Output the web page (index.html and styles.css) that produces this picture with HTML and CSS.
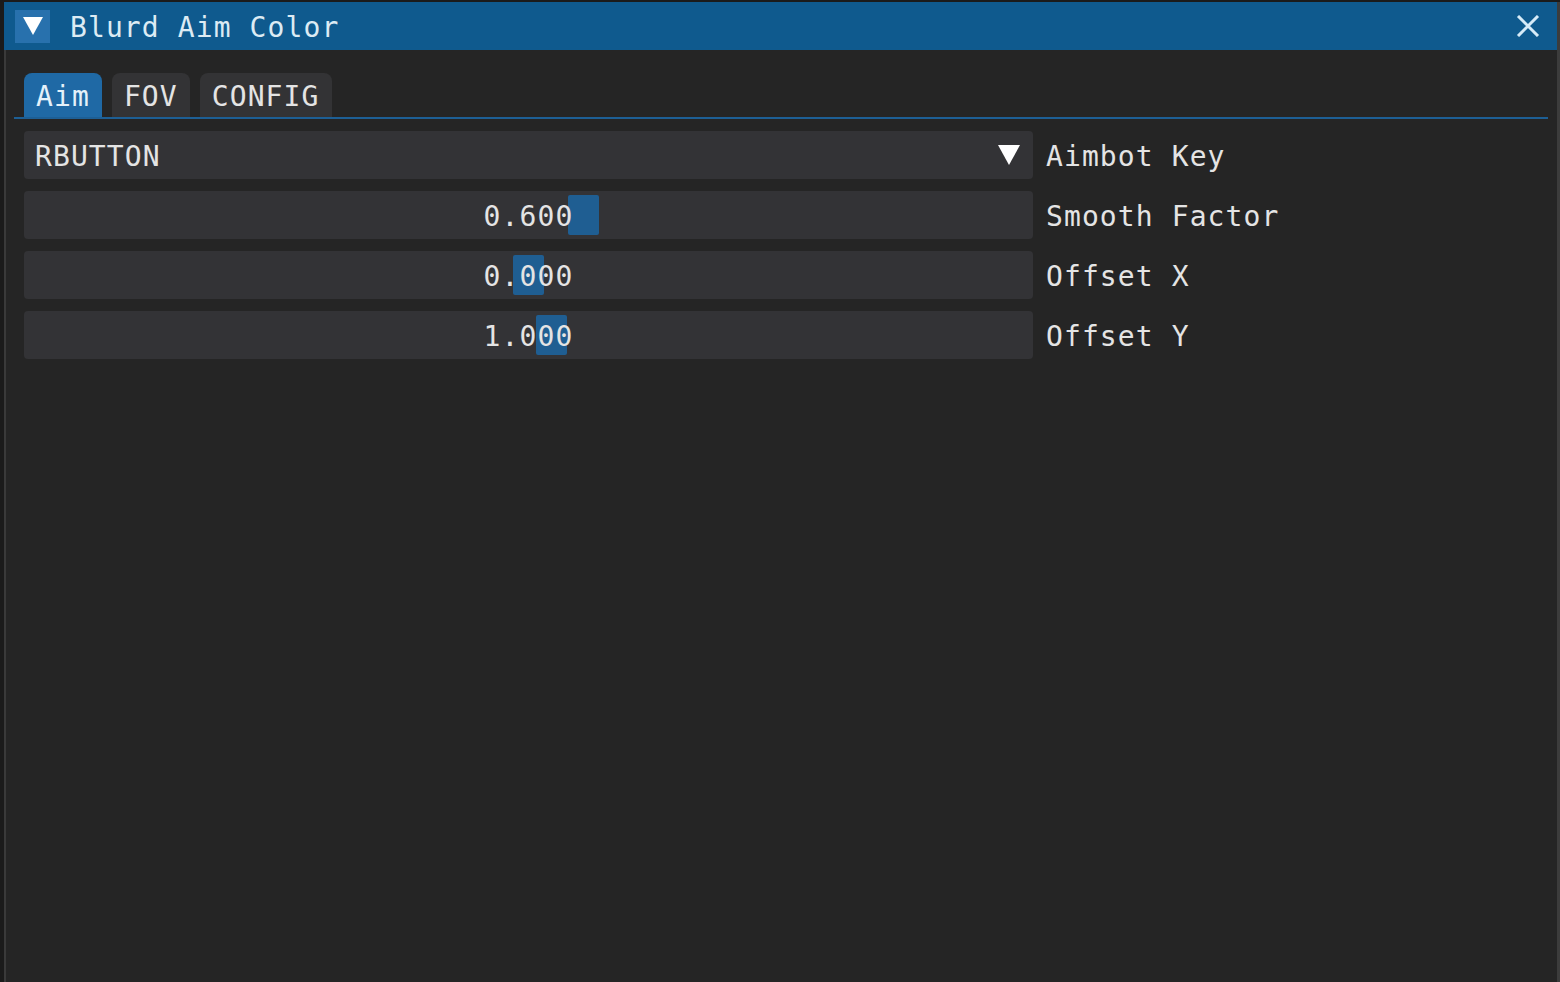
FILE: index.html
```html
<!DOCTYPE html>
<html lang="en">
<head>
  <meta charset="UTF-8" />
  <title>Blurd Aim Color</title>
  <link rel="stylesheet" href="styles.css">
</head>
<body>
  <div class="window">
    <div class="titlebar">
      <span class="collapse">
        <svg width="22" height="20" viewBox="0 0 22 20"><polygon points="1,1 21,1 11,19" fill="#ffffff"/></svg>
      </span>
      <span class="title">Blurd Aim Color</span>
      <span class="close">
        <svg width="24" height="22" viewBox="0 0 24 22"><path d="M2 1 L22 21 M22 1 L2 21" stroke="#d6ebf8" stroke-width="3"/></svg>
      </span>
    </div>

    <div class="content">
      <div class="tabbar">
        <span class="tab active">Aim</span>
        <span class="tab">FOV</span>
        <span class="tab">CONFIG</span>
      </div>

      <div class="rows">
        <div class="row">
          <div class="frame combo">
            <span class="combo-value">RBUTTON</span>
            <svg class="combo-arrow" width="22" height="20" viewBox="0 0 22 20"><polygon points="0,0 22,0 11,20" fill="#ffffff"/></svg>
          </div>
          <span class="label">Aimbot Key</span>
        </div>

        <div class="row">
          <div class="frame slider">
            <span class="grab" style="left: 544px"></span>
            <span class="value">0.600</span>
          </div>
          <span class="label">Smooth Factor</span>
        </div>

        <div class="row">
          <div class="frame slider">
            <span class="grab" style="left: 489px"></span>
            <span class="value">0.000</span>
          </div>
          <span class="label">Offset X</span>
        </div>

        <div class="row">
          <div class="frame slider">
            <span class="grab" style="left: 512px"></span>
            <span class="value">1.000</span>
          </div>
          <span class="label">Offset Y</span>
        </div>
      </div>
    </div>
  </div>
</body>
</html>
```

FILE: styles.css
```css
:root {
  --title-bg: #0f5a8e;
  --collapse-bg: #2871ad;
  --window-bg: #252525;
  --frame-bg: #333336;
  --tab-bg: #333335;
  --tab-active: #1f69a5;
  --tab-line: #1d5f95;
  --grab-color: #1f5e92;
  --text-color: #e4e4e4;
}

body {
  margin: 0;
  height: 982px;
  overflow: hidden;
  background: #1b1b1b;
  font-family: 'DejaVu Sans Mono', 'Liberation Mono', monospace;
  font-size: 28px;
  letter-spacing: 1.1px;
  color: var(--text-color);
}

.window {
  margin: 2px 0 0 4px;
  width: 1553px;
  height: 980px;
  display: flex;
  flex-direction: column;
  background: var(--window-bg);
  border-right: 3px solid #3c3c3c;
}

/* Title bar */
.titlebar {
  height: 48px;
  flex-shrink: 0;
  display: flex;
  align-items: center;
  background: var(--title-bg);
  padding: 0 17px 0 11px;
}

.collapse {
  width: 35px;
  height: 33px;
  display: flex;
  justify-content: center;
  align-items: center;
  background: var(--collapse-bg);
}

.title {
  margin-left: 20px;
  padding-top: 2px;
  color: #dcebf4;
  flex: 1;
}

.close {
  display: flex;
  align-items: center;
}

/* Content */
.content {
  flex: 1;
  border-left: 2px solid #3a3a3a;
  padding: 23px 19px 0 18px;
}

.tabbar {
  display: flex;
  gap: 10px;
  margin: 0 -10px;
  padding: 0 10px;
  border-bottom: 2px solid var(--tab-line);
}

.tab {
  height: 44px;
  line-height: 48px;
  padding: 0 12px;
  background: var(--tab-bg);
  border-radius: 8px 8px 0 0;
}

.tab.active {
  background: var(--tab-active);
  color: #e4f1fa;
}

.rows {
  margin-top: 12px;
  display: flex;
  flex-direction: column;
  gap: 12px;
}

.row {
  display: flex;
  align-items: center;
  gap: 13px;
}

.frame {
  position: relative;
  width: 1009px;
  height: 48px;
  background: var(--frame-bg);
  border-radius: 4px;
  display: flex;
  align-items: center;
}

.combo {
  padding: 0 13px 0 11px;
  box-sizing: border-box;
  justify-content: space-between;
}

.combo-value {
  padding-top: 2px;
}

.slider {
  justify-content: center;
}

.grab {
  position: absolute;
  top: 4px;
  width: 31px;
  height: 40px;
  background: var(--grab-color);
  border-radius: 2px;
}

.value {
  position: relative;
  padding-top: 2px;
}

.label {
  white-space: nowrap;
  padding-top: 2px;
}
```
